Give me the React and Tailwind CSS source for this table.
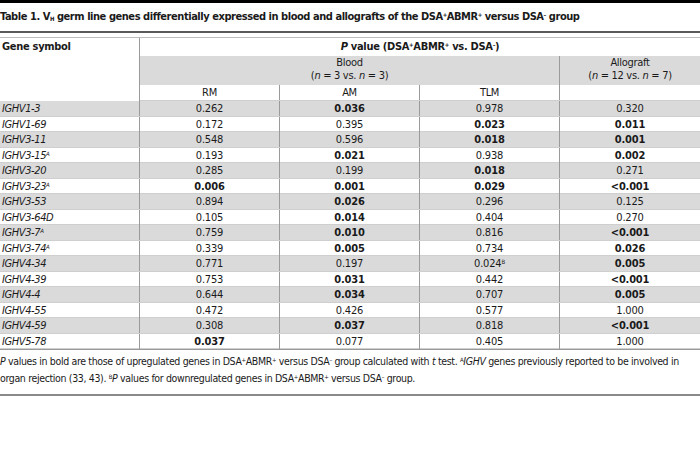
import React from "react";

const FONT = { fontFamily: '"Liberation Sans Narrow", "DejaVu Sans Condensed", Roboto, sans-serif' };

const rows = [
  ["IGHV1-3", "", ["0.262", 0], ["0.036", 1], ["0.978", 0], ["0.320", 0]],
  ["IGHV1-69", "", ["0.172", 0], ["0.395", 0], ["0.023", 1], ["0.011", 1]],
  ["IGHV3-11", "", ["0.548", 0], ["0.596", 0], ["0.018", 1], ["0.001", 1]],
  ["IGHV3-15", "A", ["0.193", 0], ["0.021", 1], ["0.938", 0], ["0.002", 1]],
  ["IGHV3-20", "", ["0.285", 0], ["0.199", 0], ["0.018", 1], ["0.271", 0]],
  ["IGHV3-23", "A", ["0.006", 1], ["0.001", 1], ["0.029", 1], ["<0.001", 1]],
  ["IGHV3-53", "", ["0.894", 0], ["0.026", 1], ["0.296", 0], ["0.125", 0]],
  ["IGHV3-64D", "", ["0.105", 0], ["0.014", 1], ["0.404", 0], ["0.270", 0]],
  ["IGHV3-7", "A", ["0.759", 0], ["0.010", 1], ["0.816", 0], ["<0.001", 1]],
  ["IGHV3-74", "A", ["0.339", 0], ["0.005", 1], ["0.734", 0], ["0.026", 1]],
  ["IGHV4-34", "", ["0.771", 0], ["0.197", 0], ["0.024", 0, "B"], ["0.005", 1]],
  ["IGHV4-39", "", ["0.753", 0], ["0.031", 1], ["0.442", 0], ["<0.001", 1]],
  ["IGHV4-4", "", ["0.644", 0], ["0.034", 1], ["0.707", 0], ["0.005", 1]],
  ["IGHV4-55", "", ["0.472", 0], ["0.426", 0], ["0.577", 0], ["1.000", 0]],
  ["IGHV4-59", "", ["0.308", 0], ["0.037", 1], ["0.818", 0], ["<0.001", 1]],
  ["IGHV5-78", "", ["0.037", 1], ["0.077", 0], ["0.405", 0], ["1.000", 0]],
];

const Sup = ({ children }) => (
  <sup className="relative -top-[3px] align-baseline text-[6px] leading-none">{children}</sup>
);

const Row = ({ row, i }) => {
  const [gene, mark, ...cells] = row;
  return (
    <div
      className={`grid h-[15.5px] grid-cols-[140px_140px_140px_140px_140px] border-b border-[#cfcfcf] text-[11px] leading-[15px] ${
        i % 2 === 0 ? "bg-[#dadada]" : "bg-white"
      }`}
    >
      <div className="border-r border-[#9a9a9a] pl-[2px] italic tracking-[-0.4px]">
        {gene}
        {mark && <Sup>{mark}</Sup>}
      </div>
      {cells.map(([v, b, m], j) => (
        <div
          key={j}
          className={`text-center tracking-[-0.2px] ${j < 3 ? "border-r border-[#9a9a9a]" : ""} ${b ? "font-bold" : ""}`}
        >
          {v}
          {m && <Sup>{m}</Sup>}
        </div>
      ))}
    </div>
  );
};

export default function App() {
  return (
    <div className="h-[451px] w-[700px] bg-white text-[#1a1a1a]" style={FONT}>
      <div className="h-[3px] bg-black" />
      <div className="flex h-[30px] items-center border-b-2 border-[#5a5a5a] text-[11px] font-bold tracking-[-0.45px]">
        <span className="leading-[14px]">
          Table 1. V<sub className="relative top-[1px] text-[6px] leading-none">H</sub> germ line genes differentially
          expressed in blood and allografts of the DSA<Sup>+</Sup>ABMR<Sup>+</Sup> versus DSA<Sup>–</Sup> group
        </span>
      </div>

      <div className="mt-[4px] border-t border-[#bdbdbd] border-b border-b-[#9a9a9a]">
        <div className="flex text-[11px] tracking-[-0.3px]">
          <div className="w-[140px] border-r border-[#9a9a9a] pl-[2px] pt-[2px] leading-[14px] font-bold">Gene symbol</div>
          <div className="flex w-[560px] flex-col">
            <div className="flex h-[18px] items-center justify-center font-bold">
              <span className="leading-[14px]">
                <i>P</i> value (DSA<Sup>+</Sup>ABMR<Sup>+</Sup> vs. DSA<Sup>–</Sup>)
              </span>
            </div>
            <div className="flex h-[29px] bg-[#dadada] leading-[13px]">
              <div className="flex w-[420px] flex-col items-center border-r border-[#9a9a9a]">
                <span>Blood</span>
                <span>
                  (<i>n</i> = 3 vs. <i>n</i> = 3)
                </span>
              </div>
              <div className="flex w-[140px] flex-col items-center">
                <span>Allograft</span>
                <span>
                  (<i>n</i> = 12 vs. <i>n</i> = 7)
                </span>
              </div>
            </div>
            <div className="grid h-[16px] grid-cols-[140px_140px_140px_140px] border-b border-[#cfcfcf] leading-[15px]">
              <div className="border-r border-[#9a9a9a] text-center">RM</div>
              <div className="border-r border-[#9a9a9a] text-center">AM</div>
              <div className="border-r border-[#9a9a9a] text-center">TLM</div>
              <div />
            </div>
          </div>
        </div>
        {rows.map((r, i) => (
          <Row key={r[0]} row={r} i={i} />
        ))}
      </div>

      <div className="border-b-2 border-[#8a8a8a] pb-[7px] pt-[3px] text-[10.5px] leading-[17px] tracking-[-0.35px]">
        <div>
          <i>P</i> values in bold are those of upregulated genes in DSA<Sup>+</Sup>ABMR<Sup>+</Sup> versus DSA<Sup>–</Sup>{" "}
          group calculated with <i>t</i> test. <Sup>A</Sup>
          <i>IGHV</i> genes previously reported to be involved in
        </div>
        <div>
          organ rejection (33, 43). <Sup>B</Sup>
          <i>P</i> values for downregulated genes in DSA<Sup>+</Sup>ABMR<Sup>+</Sup> versus DSA<Sup>–</Sup> group.
        </div>
      </div>
    </div>
  );
}
